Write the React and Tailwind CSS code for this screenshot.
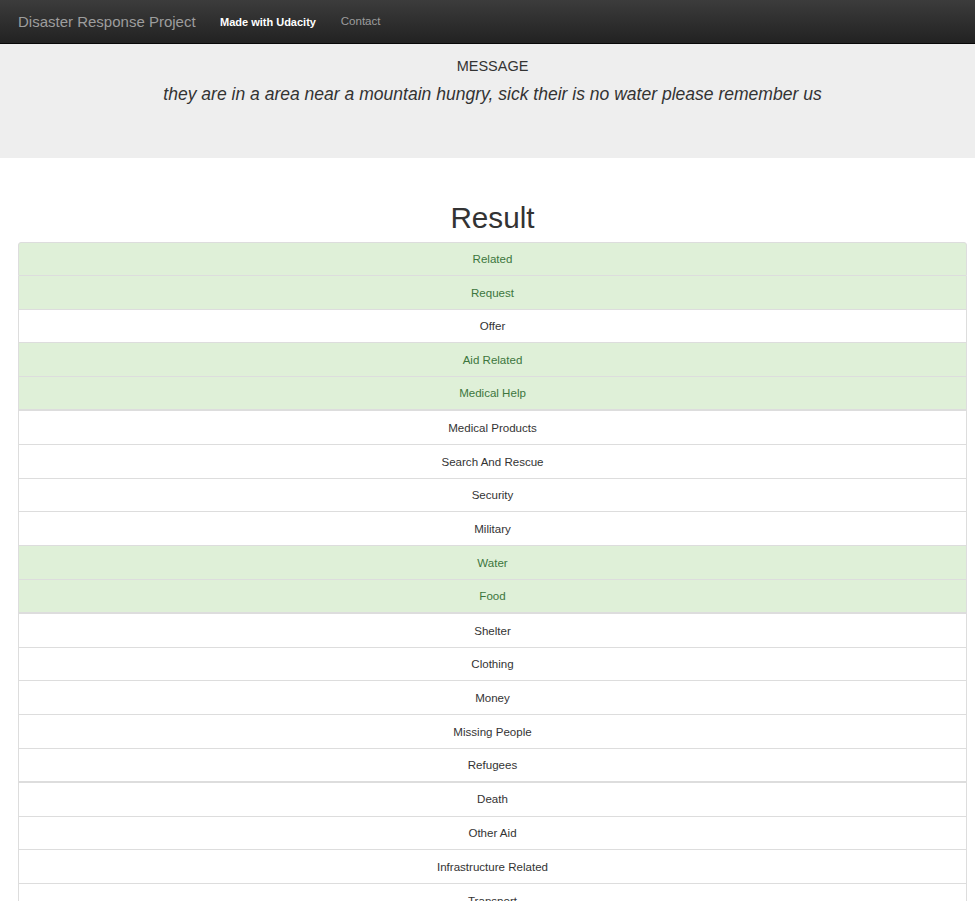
import React from "react";

const categories = [
  { name: "Related", hit: true },
  { name: "Request", hit: true },
  { name: "Offer" },
  { name: "Aid Related", hit: true },
  { name: "Medical Help", hit: true, thick: true },
  { name: "Medical Products" },
  { name: "Search And Rescue" },
  { name: "Security" },
  { name: "Military" },
  { name: "Water", hit: true },
  { name: "Food", hit: true, thick: true },
  { name: "Shelter" },
  { name: "Clothing" },
  { name: "Money" },
  { name: "Missing People" },
  { name: "Refugees", thick: true },
  { name: "Death" },
  { name: "Other Aid" },
  { name: "Infrastructure Related" },
  { name: "Transport" },
  { name: "Buildings" },
  { name: "Electricity" },
  { name: "Tools" },
  { name: "Hospitals" },
  { name: "Shops" },
  { name: "Aid Centers" },
  { name: "Other Infrastructure" },
  { name: "Weather Related" },
  { name: "Floods" },
  { name: "Storm" },
  { name: "Fire" },
  { name: "Earthquake" },
  { name: "Cold" },
  { name: "Other Weather" },
  { name: "Direct Report" },
];

const Navbar = () => (
  <nav className="h-[44px] border-b border-[#080808] bg-gradient-to-b from-[#3c3c3c] to-[#222222]">
    <div className="flex h-[43px] items-center pl-[18px]">
      <a className="pt-[1px] text-[15px] text-[#9d9d9d]">Disaster Response Project</a>
      <ul className="ml-[12px] flex items-center pt-[1px]">
        <li className="px-[12.4px] text-[11px] font-bold text-white">Made with Udacity</li>
        <li className="px-[12.4px] text-[11.55px] text-[#9d9d9d]">Contact</li>
      </ul>
    </div>
  </nav>
);

const Message = () => (
  <section className="h-[114px] bg-[#eeeeee] pl-[18px] pr-[8px] pt-[12px] text-center text-[#333]">
    <h3 className="text-[14.5px] leading-[20px]">MESSAGE</h3>
    <p className="mt-[5px] text-[17.55px] italic leading-[26px]">
      they are in a area near a mountain hungry, sick their is no water please remember us
    </p>
  </section>
);

const ResultRow = ({ item, first }) => {
  const tone = item.hit
    ? "bg-[#dff0d8] text-[#3c763d]"
    : "bg-white text-[#333]";
  const edge = item.thick ? "border-b-2" : "border-b";
  return (
    <li
      className={`flex h-[33.8px] items-center justify-center border-x border-[#dddddd] pt-[2px] text-[11.55px] ${edge} ${tone} ${
        first ? "rounded-t-[3px] border-t" : ""
      }`}
    >
      {item.name}
    </li>
  );
};

export default function App() {
  return (
    <div className="min-h-screen bg-white font-['Liberation_Sans',Arial,sans-serif]">
      <Navbar />
      <Message />
      <main className="pl-[18px] pr-[8px] pt-[43px]">
        <h1 className="text-center text-[29.7px] leading-[33px] text-[#333]">Result</h1>
        <ul className="mt-[8px] pb-[20px]">
          {categories.map((item, i) => (
            <ResultRow key={item.name} item={item} first={i === 0} />
          ))}
        </ul>
      </main>
    </div>
  );
}
